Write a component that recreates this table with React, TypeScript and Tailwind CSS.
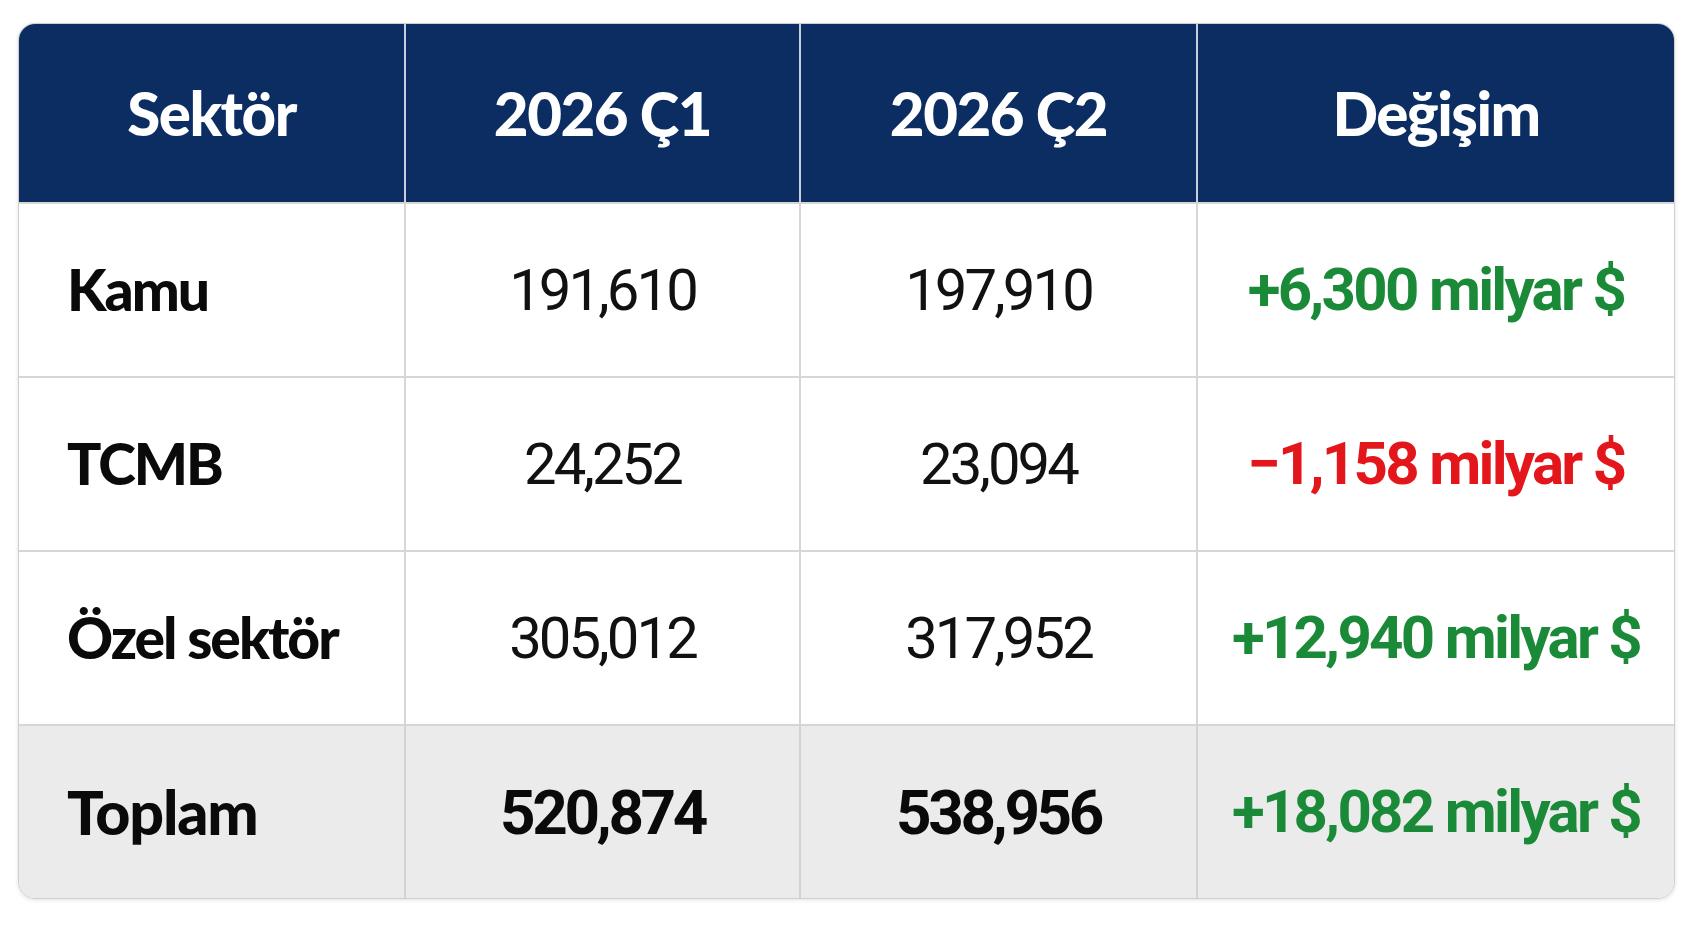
const rows = [
  { name: "Kamu", q1: "191,610", q2: "197,910", diff: "+6,300 milyar $", up: true },
  { name: "TCMB", q1: "24,252", q2: "23,094", diff: "\u22121,158 milyar $", up: false },
  { name: "Özel sektör", q1: "305,012", q2: "317,952", diff: "+12,940 milyar $", up: true },
];

const heads = ["Sektör", "2026 Ç1", "2026 Ç2", "Değişim"];

export default function App() {
  return (
    <div className="w-[1693px] h-[929px] bg-white pt-[23px] pl-[18px]">
      <div className="w-[1657px] rounded-[17px] overflow-hidden border border-[#cfcfcf] shadow-[0_1px_4px_rgba(0,0,0,0.12)]">
        <div className="grid grid-cols-[385px_395px_397px_1fr] h-[178px] bg-[#0b2d62] text-white font-['Lato',sans-serif] font-black text-[60px] tracking-[-0.025em]">
          {heads.map((h, i) => (
            <div
              key={h}
              className={`flex items-center justify-center ${i > 0 ? "border-l-2 border-[#c9d0db]" : ""}`}
            >
              {h}
            </div>
          ))}
        </div>
        {rows.map((r) => (
          <div key={r.name} className="grid grid-cols-[385px_395px_397px_1fr] h-[174px] bg-white border-t-2 border-[#d6d6d6]">
            <div className="flex items-center pl-[48px] font-['Lato',sans-serif] font-black text-[57px] tracking-[-0.035em] text-[#0a0a0a]">
              {r.name}
            </div>
            <div className="flex items-center justify-center border-l-2 border-[#d6d6d6] font-['Roboto',sans-serif] font-normal text-[58px] tracking-[-0.05em] text-[#111]">
              {r.q1}
            </div>
            <div className="flex items-center justify-center border-l-2 border-[#d6d6d6] font-['Roboto',sans-serif] font-normal text-[58px] tracking-[-0.05em] text-[#111]">
              {r.q2}
            </div>
            <div
              className={`flex items-center justify-center border-l-2 border-[#d6d6d6] font-['Roboto',sans-serif] font-bold text-[60px] tracking-[-0.045em] ${r.up ? "text-[#1b8a38]" : "text-[#e3161c]"}`}
            >
              {r.diff}
            </div>
          </div>
        ))}
        <div className="grid grid-cols-[385px_395px_397px_1fr] h-[174px] bg-[#ebebeb] border-t-2 border-[#d6d6d6]">
          <div className="flex items-center pl-[48px] font-['Lato',sans-serif] font-black text-[61px] tracking-[-0.02em] text-[#0a0a0a]">
            Toplam
          </div>
          <div className="flex items-center justify-center border-l-2 border-[#d3d3d3] font-['Roboto',sans-serif] font-bold text-[62px] tracking-[-0.055em] text-[#0a0a0a]">
            520,874
          </div>
          <div className="flex items-center justify-center border-l-2 border-[#d3d3d3] font-['Roboto',sans-serif] font-bold text-[62px] tracking-[-0.055em] text-[#0a0a0a]">
            538,956
          </div>
          <div className="flex items-center justify-center border-l-2 border-[#d3d3d3] font-['Roboto',sans-serif] font-bold text-[60px] tracking-[-0.045em] text-[#1b8a38]">
            +18,082 milyar $
          </div>
        </div>
      </div>
    </div>
  );
}
